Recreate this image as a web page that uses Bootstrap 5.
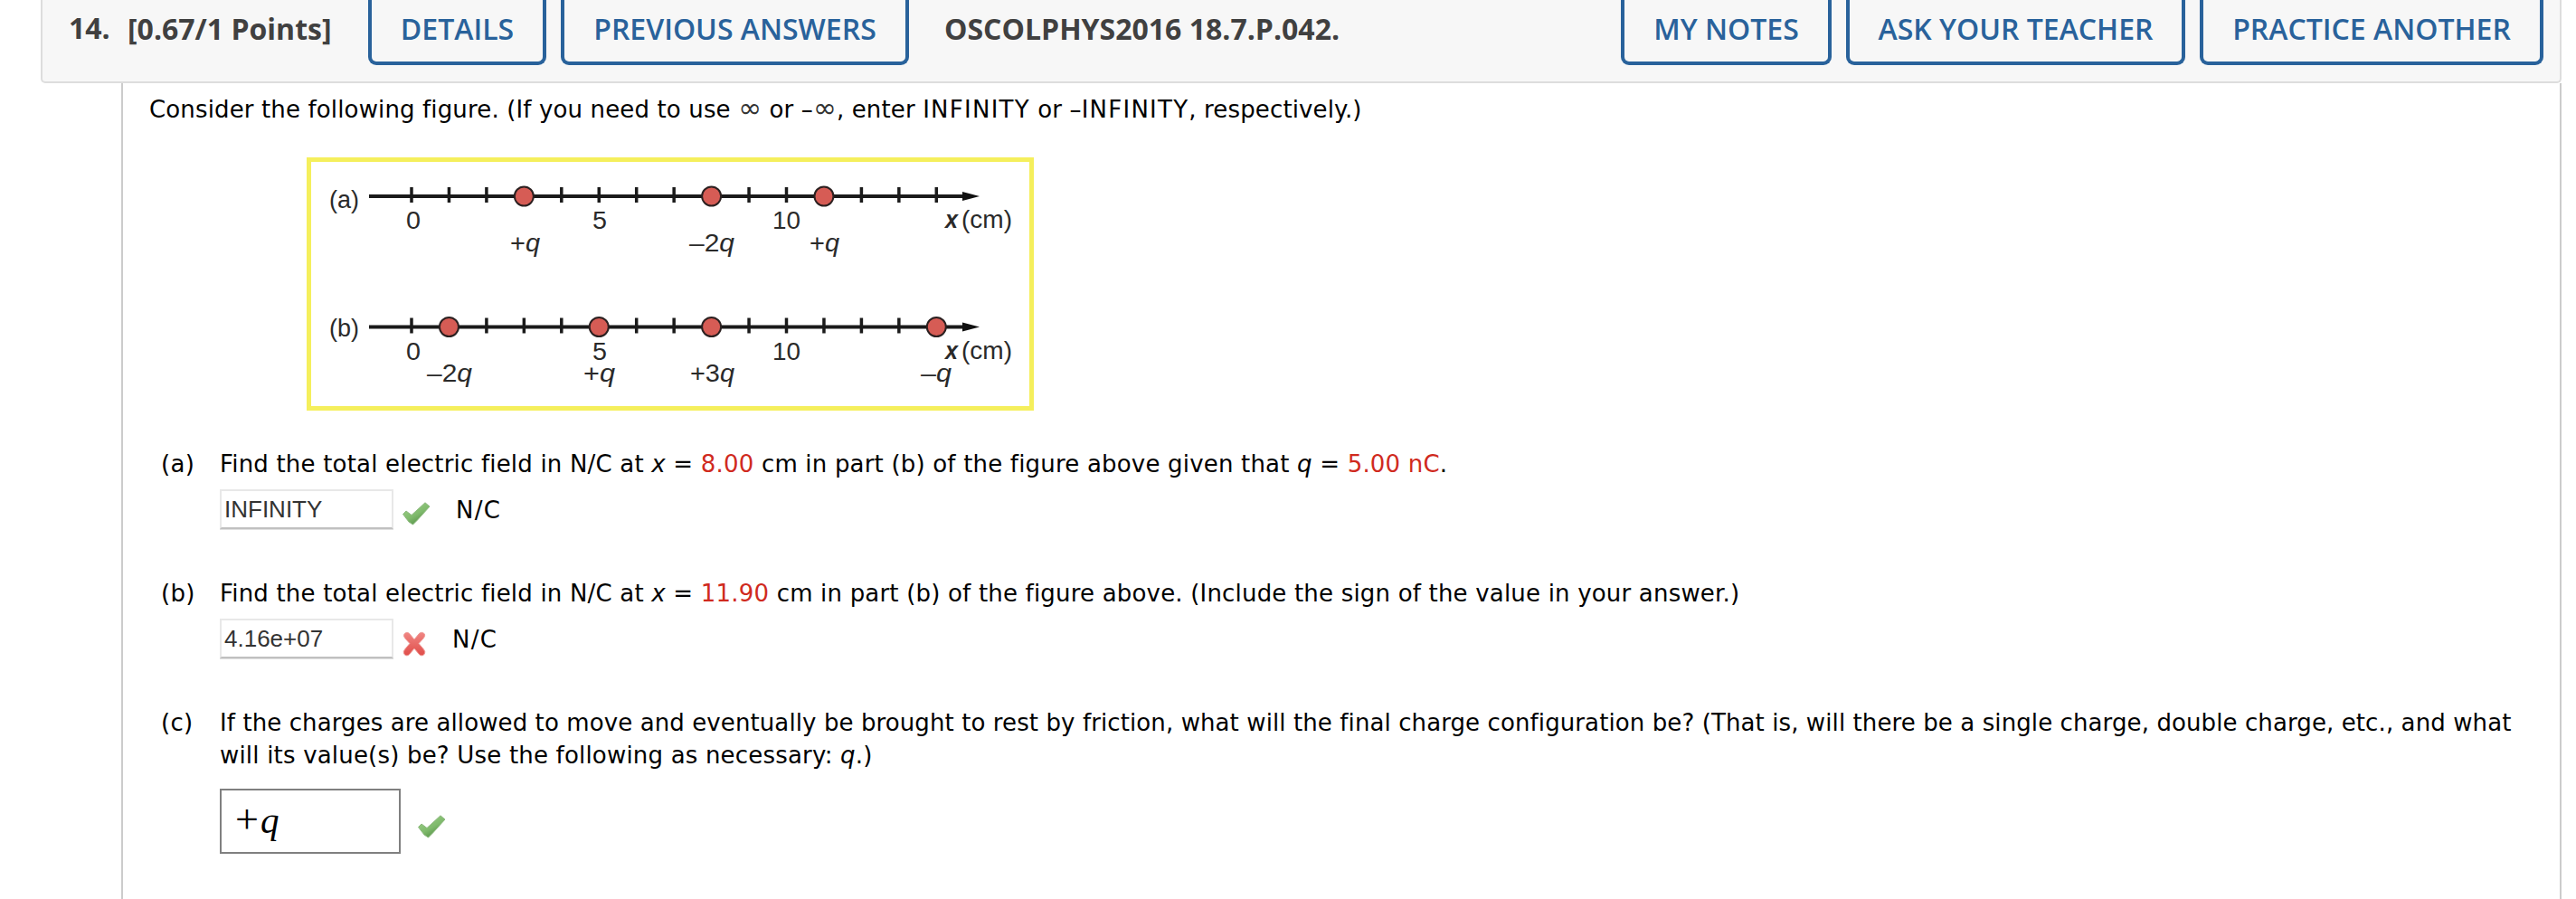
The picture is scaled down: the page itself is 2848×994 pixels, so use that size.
<!DOCTYPE html>
<html lang="en">
<head>
    <meta charset="UTF-8">
    <meta name="viewport" content="width=device-width, initial-scale=1.0">
    <title>Question 14</title>
    <link rel="stylesheet" href="https://cdn.jsdelivr.net/npm/bootstrap@5.3.0/dist/css/bootstrap.min.css">
    <style>
        body {
            background: #fff;
            color: #000;
            font: 26px/36px "DejaVu Sans", Verdana, sans-serif;
            height: 994px;
            overflow: hidden;
        }
        .question {
            width: 2787px;
            margin-left: 45px;
            height: 994px;
        }
        .question-header {
            height: 92px;
            padding: 0 18px 0 29px;
            background: #f7f7f7;
            border: 2px solid #ddd;
            border-top: 0;
            border-radius: 0 0 5px 5px;
            font: 700 32px/64px "Open Sans", sans-serif;
            color: #404040;
            white-space: nowrap;
        }
        .question-number { width: 65px; line-height: 61px; }
        .question-points { width: 266px; }
        .question-name { margin-left: 39px; }
        .btn-webassign {
            height: 72px;
            padding: 0;
            border: 4px solid #29629b;
            border-top: 0;
            border-radius: 0 0 9px 9px;
            color: #29629b;
            font: 600 32px/60px "Open Sans", sans-serif;
            padding-bottom: 4px;
        }
        .w-details { width: 197px; }
        .w-previous { width: 385px; }
        .w-notes { width: 233px; }
        .w-ask { width: 375px; }
        .w-practice { width: 380px; }
        .question-body {
            margin-left: 89px;
            padding: 11px 0 0 29px;
            border: solid #ccc;
            border-width: 0 2px;
        }
        .intro { letter-spacing: .14px; }
        .keyword { letter-spacing: 1.25px; }
        .infinity { font-size: 31px; line-height: 1; color: #333; }
        .line-a, .line-b, .line-d { letter-spacing: .19px; }
        .line-c { letter-spacing: .1px; }
        .figure-box { margin: 35px 0 0 174px; width: 804px; height: 280px; }
        .part { height: 143px; padding-left: 13px; white-space: nowrap; }
        .part-first { margin-top: 41px; }
        .part-label { width: 65px; letter-spacing: .3px; }
        .value { color: #d02a1e; }
        .answer-input {
            width: 192px;
            height: 44px;
            padding: 0 3px;
            border: 2px solid #e8e8e8;
            border-bottom-color: #c0c0c0;
            box-shadow: 0 1px 0 #e0e0e0;
            background: #fff;
            color: #333;
            font: 26px/40px "Liberation Sans", Arial, sans-serif;
        }
        .answer-row { margin-top: 10px; height: 46px; }
        .answer-icon { margin: 14px 0 0 9px; }
        .unit { padding-top: 5px; margin-left: 28px; letter-spacing: 1.3px; }
        .math-box {
            width: 200px;
            height: 72px;
            border: 2px solid #808080;
            padding-left: 15px;
            font: 41px/66px "Liberation Serif", "Times New Roman", serif;
        }
        .math-plus { font-size: 46px; line-height: 1; margin-right: 2px; }
        .math-row { margin-top: 19px; }
        .math-icon { margin: 29px 0 0 18px; }
    </style>
</head>
<body>
    <div class="question d-flex flex-column">
        <div class="question-header d-flex align-items-start flex-shrink-0">
            <div class="question-number">14.</div>
            <div class="question-points">[0.67/1 Points]</div>
            <button class="btn btn-webassign w-details">DETAILS</button>
            <button class="btn btn-webassign w-previous ms-3">PREVIOUS ANSWERS</button>
            <div class="question-name">OSCOLPHYS2016 18.7.P.042.</div>
            <button class="btn btn-webassign w-notes ms-auto">MY NOTES</button>
            <button class="btn btn-webassign w-ask ms-3">ASK YOUR TEACHER</button>
            <button class="btn btn-webassign w-practice ms-3">PRACTICE ANOTHER</button>
        </div>

        <div class="question-body flex-grow-1">
            <div class="intro">Consider the following figure. (If you need to use <span class="infinity">∞</span> or –<span class="infinity">∞</span>, enter <span class="keyword">INFINITY</span> or –<span class="keyword">INFINITY</span>, respectively.)</div>

            <svg class="figure-box d-block" id="figure" viewBox="339 174 804 280">
                <rect x="341.5" y="176.5" width="799" height="275" fill="#fff" stroke="#f5ef5c" stroke-width="5"/>
            </svg>

            <div class="part part-first d-flex">
                <div class="part-label">(a)</div>
                <div>
                    <div class="line-a">Find the total electric field in N/C at <i>x</i> = <span class="value">8.00</span> cm in part (b) of the figure above given that <i>q</i> = <span class="value">5.00 nC</span>.</div>
                    <div class="answer-row d-flex">
                        <div class="answer-input">INFINITY</div>
                        <svg class="answer-icon" width="32" height="26" viewBox="0 0 32 26"><use href="#check"/></svg>
                        <div class="unit">N/C</div>
                    </div>
                </div>
            </div>

            <div class="part d-flex">
                <div class="part-label">(b)</div>
                <div>
                    <div class="line-b">Find the total electric field in N/C at <i>x</i> = <span class="value">11.90</span> cm in part (b) of the figure above. (Include the sign of the value in your answer.)</div>
                    <div class="answer-row d-flex">
                        <div class="answer-input">4.16e+07</div>
                        <svg class="answer-icon" width="28" height="28" viewBox="0 0 28 28">
                            <path d="M3 3Q6-.5 9 3L14 9 19 3Q22-.5 25.500 3Q26.500 5 24 8L19 13.500 24.500 20Q27 23 25 25.500Q22 28.500 19 25L14 19 9 25Q6 28.500 3 25.500Q1 23 3.500 20L9 13.500 4 8Q1.500 5 3 3Z" fill="url(#red)" stroke="#f09b98"/>
                        </svg>
                        <div class="unit">N/C</div>
                    </div>
                </div>
            </div>

            <div class="part d-flex">
                <div class="part-label">(c)</div>
                <div>
                    <div class="line-c">If the charges are allowed to move and eventually be brought to rest by friction, what will the final charge configuration be? (That is, will there be a single charge, double charge, etc., and what</div>
                    <div class="line-d">will its value(s) be? Use the following as necessary: <i>q</i>.)</div>
                    <div class="math-row d-flex">
                        <div class="math-box"><span class="math-plus">+</span><i>q</i></div>
                        <svg class="math-icon" width="32" height="26" viewBox="0 0 32 26"><use href="#check"/></svg>
                    </div>
                </div>
            </div>
        </div>
    </div>

    <svg class="position-absolute" width="0" height="0">
        <defs>
            <linearGradient id="green" x1="0" y1="0" x2=".7" y2="1">
                <stop offset="0" stop-color="#a3d48d"/><stop offset=".6" stop-color="#7fba6c"/><stop offset="1" stop-color="#4d8a40"/>
            </linearGradient>
            <linearGradient id="red" x1="0" y1="0" x2="0" y2="1">
                <stop offset="0" stop-color="#f08683"/><stop offset="1" stop-color="#e04d49"/>
            </linearGradient>
            <path id="check" d="M1.500 13.500L5 10 11 14.500 26 .8 31 5 17.500 20 12.500 25 8 22Z" fill="url(#green)" stroke="#8db97f" stroke-linejoin="round"/>
        </defs>
    </svg>

    <script src="https://cdn.jsdelivr.net/npm/bootstrap@5.3.0/dist/js/bootstrap.bundle.min.js"></script>
    <script>
        const figure = document.getElementById("figure");
        const zeroX = 455;
        const unit = 41.45;

        function addShape(name, attrs, html) {
            let el = document.createElementNS("http://www.w3.org/2000/svg", name);
            for (let key in attrs) el.setAttribute(key, attrs[key]);
            if (html) el.innerHTML = html;
            figure.appendChild(el);
        }

        // text with its left edge, baseline and width
        function addLabel(x, y, width, html) {
            addShape("text", {
                x: x, y: y, textLength: width, lengthAdjust: "spacingAndGlyphs",
                "font-family": "Liberation Sans, Arial, sans-serif", "font-size": 27, fill: "#2a2a2a"
            }, html);
        }

        function drawAxis(y, name, charges) {
            addShape("path", { d: `M408 ${y}H1066`, stroke: "#1a1a1a", "stroke-width": 4 });
            addShape("path", { d: `M1064 ${y - 5}L1083 ${y}L1064 ${y + 5}Z`, fill: "#111" });
            for (let i = 0; i <= 14; i++) {
                addShape("path", { d: `M${zeroX + i * unit} ${y - 10}v17`, stroke: "#1a1a1a", "stroke-width": 3.5 });
            }
            charges.forEach(i => addShape("circle", {
                cx: zeroX + i * unit, cy: y, r: 10.5, fill: "#d65c55", stroke: "#2b2020", "stroke-width": 2
            }));
            addLabel(364, y + (name === "a" ? 13 : 10), 33, `(${name})`);
            addLabel(449, y + 36, 16, "0");
            addLabel(655, y + 36, 16, "5");
            addLabel(854, y + 36, 31, "10");
            addLabel(1045, y + 35, 14, '<tspan font-style="italic" font-weight="bold">x</tspan>');
            addLabel(1063, y + 35, 56, "(cm)");
        }

        drawAxis(217, "a", [3, 8, 11]);
        addLabel(564, 278, 33, "+<tspan font-style='italic'>q</tspan>");
        addLabel(762, 278, 50, "–2<tspan font-style='italic'>q</tspan>");
        addLabel(895, 278, 33, "+<tspan font-style='italic'>q</tspan>");

        drawAxis(361.500, "b", [1, 5, 8, 14]);
        addLabel(472, 422, 50, "–2<tspan font-style='italic'>q</tspan>");
        addLabel(645, 422, 35, "+<tspan font-style='italic'>q</tspan>");
        addLabel(763, 422, 49, "+3<tspan font-style='italic'>q</tspan>");
        addLabel(1018, 422, 34, "–<tspan font-style='italic'>q</tspan>");
    </script>
</body>
</html>
